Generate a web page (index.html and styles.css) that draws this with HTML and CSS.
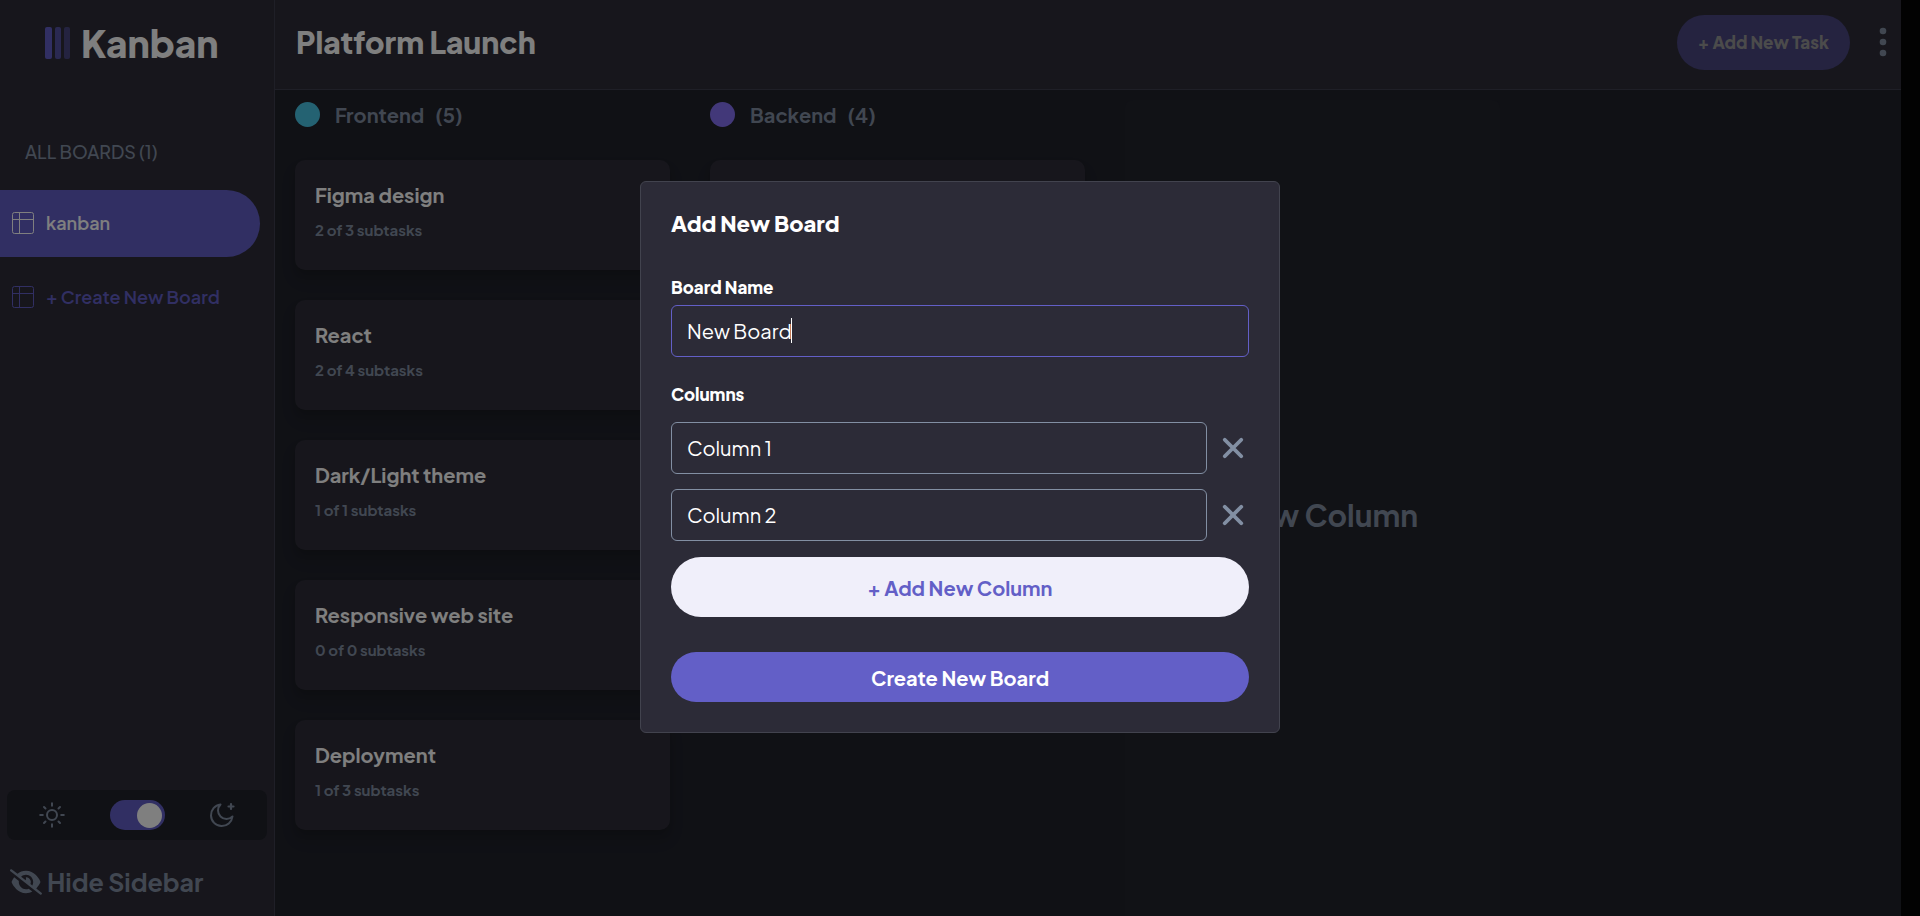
FILE: index.html
```html
<!DOCTYPE html>
<html lang="en">
<head>
<meta charset="utf-8">
<title>Kanban</title>
<link rel="stylesheet" href="styles.css">
</head>
<body>
<svg class="defs" aria-hidden="true">
  <symbol id="board" viewBox="0 0 24 24"><path fill="none" stroke="currentColor" stroke-width="1" d="M3.500 1.500H20.500A2 2 0 0 1 22.500 3.500V20.500A2 2 0 0 1 20.500 22.500H3.500A2 2 0 0 1 1.500 20.500V3.500A2 2 0 0 1 3.500 1.500ZM1.500 8.500H22.500M8.500 1.500V22.500"/></symbol>
  <symbol id="close" viewBox="0 0 24 24"><path fill="none" stroke="currentColor" stroke-width="4.200" stroke-linecap="round" d="M3 3 21 21M21 3 3 21"/></symbol>
</svg>
<div class="app">
  <aside class="sidebar">
    <div class="brand">
      <span class="bars"><i></i><i></i><i></i></span>
      <span class="brand-name">Kanban</span>
    </div>
    <h2 class="boards-title">ALL BOARDS (1)</h2>
    <nav class="boards">
      <a class="board-link active" href="#kanban"><svg class="icon"><use href="#board"/></svg><span>kanban</span></a>
      <button class="board-link create" type="button"><svg class="icon"><use href="#board"/></svg><span>+ Create New Board</span></button>
    </nav>
    <div class="sidebar-foot">
      <div class="theme">
        <svg class="theme-icon" viewBox="0 0 26 26" fill="none" stroke="currentColor" stroke-width="2" stroke-linecap="round"><circle cx="13" cy="13" r="5"/><path d="M13 1.200V3.800M13 22.200V24.800M1.200 13H3.800M22.200 13H24.800M5 5 6.500 6.500M19.500 19.500 21 21M5 21 6.500 19.500M19.500 6.500 21 5"/></svg>
        <input class="switch" type="checkbox" role="switch" aria-label="Dark theme" checked>
        <svg class="theme-icon" viewBox="0 0 26 26" fill="none" stroke="currentColor" stroke-width="2" stroke-linecap="round" stroke-linejoin="round"><path d="M11.500 2.500A10.800 10.800 0 1 0 23.500 14.500 8 8 0 0 1 11.500 2.500Z"/><path stroke-width="2.200" d="M22 2V7M19.500 4.500H24.500"/></svg>
      </div>
      <button class="hide" type="button">
        <svg class="eye" viewBox="0 0 640 512" fill="currentColor"><path d="M38.800 5.100C28.400-3.100 13.300-1.200 5.100 9.200S-1.200 34.700 9.200 42.900l592 464c10.400 8.200 25.500 6.300 33.700-4.100s6.300-25.500-4.100-33.700L525.600 386.700c39.600-40.600 66.400-86.100 79.900-118.400c3.300-7.900 3.300-16.700 0-24.600c-14.900-35.700-46.200-87.700-93-131.100C465.500 68.800 400.800 32 320 32c-68.200 0-125 26.300-169.300 60.800L38.800 5.100zM223.100 149.500C248.600 126.200 282.700 112 320 112c79.500 0 144 64.500 144 144c0 24.900-6.300 48.300-17.400 68.700L408 294.500c8.400-19.300 10.600-41.400 4.800-63.300c-11.100-41.500-47.800-69.400-88.600-71.100c-5.800-.2-9.200 6.100-7.400 11.700c2.100 6.400 3.300 13.200 3.300 20.300c0 10.200-2.400 19.800-6.600 28.300l-90.300-70.800zM373 389.900c-16.400 6.500-34.300 10.100-53 10.100c-79.500 0-144-64.500-144-144c0-6.900 .5-13.600 1.400-20.200L83.100 161.500C60.300 191.200 44 220.800 34.500 243.700c-3.300 7.900-3.300 16.700 0 24.600c14.900 35.700 46.200 87.700 93 131.100C174.500 443.200 239.200 480 320 480c47.800 0 89.900-12.900 126.200-32.500L373 389.900z"/></svg>
        <span>Hide Sidebar</span>
      </button>
    </div>
  </aside>
  <div class="main">
    <header class="topbar">
      <h1>Platform Launch</h1>
      <button class="add-task" type="button" disabled>+ Add New Task</button>
      <button class="more" type="button" aria-label="Board menu"><svg viewBox="0 0 8 30" fill="currentColor"><circle cx="4" cy="4" r="3.300"/><circle cx="4" cy="15" r="3.300"/><circle cx="4" cy="26" r="3.300"/></svg></button>
    </header>
    <main class="columns">
      <section class="column">
        <h2 class="column-title"><span class="dot frontend"></span><span>Frontend</span><span>(5)</span></h2>
        <article class="card"><h3>Figma design</h3><p>2 of 3 subtasks</p></article>
        <article class="card"><h3>React</h3><p>2 of 4 subtasks</p></article>
        <article class="card"><h3>Dark/Light theme</h3><p>1 of 1 subtasks</p></article>
        <article class="card"><h3>Responsive web site</h3><p>0 of 0 subtasks</p></article>
        <article class="card"><h3>Deployment</h3><p>1 of 3 subtasks</p></article>
      </section>
      <section class="column">
        <h2 class="column-title"><span class="dot backend"></span><span>Backend</span><span>(4)</span></h2>
        <article class="card"></article>
        <article class="card"></article>
        <article class="card"></article>
      </section>
      <button class="new-column" type="button">+ New Column</button>
    </main>
  </div>
</div>
<div class="overlay">
  <form class="modal" role="dialog" aria-labelledby="modal-title">
    <h2 id="modal-title">Add New Board</h2>
    <label class="label" for="name">Board Name</label>
    <div class="name-box">
      <input class="field" id="name" type="text" value="New Board" autofocus>
      <span class="caret" aria-hidden="true"></span>
    </div>
    <fieldset class="group">
      <legend class="label">Columns</legend>
      <div class="row"><input class="field" type="text" aria-label="Column 1 name" value="Column 1"><button class="remove" type="button" aria-label="Remove column 1"><svg><use href="#close"/></svg></button></div>
      <div class="row"><input class="field" type="text" aria-label="Column 2 name" value="Column 2"><button class="remove" type="button" aria-label="Remove column 2"><svg><use href="#close"/></svg></button></div>
    </fieldset>
    <button class="add-column" type="button">+ Add New Column</button>
    <button class="submit" type="submit">Create New Board</button>
  </form>
</div>
<script src="script.js"></script>
</body>
</html>
```
FILE: script.js
```js
const nameField = document.getElementById("name");
nameField.focus();
nameField.setSelectionRange(nameField.value.length, nameField.value.length);
```
FILE: styles.css
```css
* { box-sizing: border-box; }
body {
  margin: 0;
  background: #040404;
  color: #fff;
  font-family: "Plus Jakarta Sans", Inter, sans-serif;
  font-size: 20px;
}
button, input { font: inherit; color: inherit; }
button { border: 0; padding: 0; background: none; }
h1, h2, h3, p { margin: 0; }
.defs { position: absolute; width: 0; height: 0; }

.app {
  display: flex;
  height: 100vh;
  margin-right: 19px;
  background: #20222b;
  overflow: hidden;
}
.sidebar {
  display: flex;
  flex: none;
  flex-direction: column;
  width: 275px;
  background: #2e2d38;
  border-right: 1px solid #3e3f4e;
}
.brand {
  display: flex;
  align-items: center;
  gap: 11px;
  height: 86px;
  padding-left: 45px;
}
.bars { display: flex; gap: 3px; }
.bars i { width: 6px; height: 32px; border-radius: 2px; background: #635fc7; }
.bars i:first-child { width: 7px; }
.bars i:nth-child(2) { opacity: .75; }
.bars i:nth-child(3) { opacity: .5; }
.brand-name { font-size: 37px; font-weight: 800; }
.boards-title {
  margin: 53px 0 25px 25px;
  color: #828fa3;
  font-size: 18px;
  font-weight: 500;
  line-height: 26px;
}
.boards { display: flex; flex-direction: column; gap: 7px; padding-right: 14px; }
.board-link {
  display: flex;
  align-items: center;
  gap: 11px;
  height: 67px;
  padding: 0 0 2px 11px;
  border-radius: 0 34px 34px 0;
  color: #635fc7;
  font-size: 18px;
  font-weight: 600;
  text-decoration: none;
}
.active { background: #635fc7; color: #fff; }
.icon { width: 24px; height: 24px; }
.sidebar-foot { margin-top: auto; padding: 0 7px 16px 7px; }
.theme {
  display: flex;
  align-items: center;
  justify-content: space-between;
  height: 50px;
  padding: 0 32px;
  border-radius: 8px;
  background: #20222b;
  color: #828fa3;
}
.theme-icon { width: 26px; height: 26px; }
.switch {
  display: flex;
  align-items: center;
  width: 55px;
  height: 30px;
  margin: 0;
  padding: 2px 3px;
  appearance: none;
  border-radius: 15px;
  background: #635fc7;
}
.switch::before {
  content: "";
  width: 25px;
  height: 25px;
  margin-left: auto;
  border-radius: 50%;
  background: #fff;
}
.hide {
  display: flex;
  align-items: center;
  gap: 5px;
  height: 36px;
  margin-top: 24px;
  padding-left: 3px;
  color: #828fa3;
  font-size: 25px;
  font-weight: 700;
}
.eye { width: 32px; height: 26px; }

.main { display: flex; flex: 1; flex-direction: column; min-width: 0; }
.topbar {
  display: flex;
  flex: none;
  align-items: center;
  height: 90px;
  padding: 0 14px 5px 21px;
  background: #2e2d38;
  border-bottom: 1px solid #3e3f4e;
}
h1 { margin-right: auto; font-size: 30px; font-weight: 800; }
.add-task {
  height: 55px;
  padding: 0 21px;
  border-radius: 28px;
  background: #4a4680;
  color: #969696;
  font-size: 17px;
  font-weight: 800;
}
.more { margin-left: 29px; color: #828fa3; }
.more svg { display: block; width: 8px; height: 30px; }
.columns { display: flex; flex: 1; gap: 40px; padding: 10px 20px; }
.column { display: flex; flex: none; flex-direction: column; gap: 30px; width: 375px; }
.column-title {
  display: flex;
  align-items: center;
  gap: 11px;
  height: 30px;
  padding-bottom: 2px;
  color: #828fa3;
  font-size: 20px;
  font-weight: 700;
}
.dot { width: 25px; height: 25px; margin-right: 4px; border-radius: 50%; }
.frontend { background: #49c4e5; }
.backend { background: #8471f2; }
.card {
  height: 110px;
  padding: 21px 20px;
  border-radius: 10px;
  background: #2e2d38;
  box-shadow: 0 4px 6px rgba(0, 0, 0, .1), 0 10px 15px rgba(0, 0, 0, .1);
}
.card h3 { font-size: 20px; font-weight: 700; line-height: 28px; }
.card p { margin-top: 9px; color: #828fa3; font-size: 15px; font-weight: 700; line-height: 24px; }
.new-column {
  flex: none;
  width: 375px;
  height: calc(100vh - 86px);
  border-radius: 8px;
  background: #22242d;
  color: #828fa3;
  font-size: 30px;
  font-weight: 700;
}

.overlay {
  position: fixed;
  inset: 0;
  display: flex;
  align-items: center;
  justify-content: center;
  padding-bottom: 2px;
  background: rgba(0, 0, 0, .5);
}
.modal {
  display: flex;
  flex-direction: column;
  width: 640px;
  padding: 25px 30px 30px;
  border: 1px solid #42434e;
  border-radius: 6px;
  background: #2c2b37;
}
.modal h2 { font-size: 22px; font-weight: 800; line-height: 32px; }
.label { padding: 0; font-size: 17px; font-weight: 800; line-height: 24px; }
.modal > .label { margin: 36px 0 6px; }
.field {
  display: block;
  width: 100%;
  height: 52px;
  padding: 0 15px 2px;
  border: 1px solid #828fa3;
  border-radius: 6px;
  outline: 0;
  background: transparent;
  font-size: 20px;
}
.field:focus { border-color: #635fc7; }
.name-box { position: relative; }
.name-box .field { caret-color: transparent; }
.caret {
  position: absolute;
  top: 13px;
  left: 120px;
  width: 1px;
  height: 25px;
  background: #fff;
}
.group { margin: 25px 0 1px; padding: 0; border: 0; }
.row { display: flex; align-items: center; margin-bottom: 15px; }
.group .label { margin-bottom: 16px; }
.remove { flex: none; width: 42px; padding-left: 15px; color: #828fa3; }
.remove svg { display: block; width: 22px; height: 22px; }
.add-column, .submit { border-radius: 30px; font-size: 20px; font-weight: 700; }
.add-column { height: 60px; background: #f0effa; color: #635fc7; }
.submit { height: 50px; margin-top: 35px; background: #635fc7; }
```
